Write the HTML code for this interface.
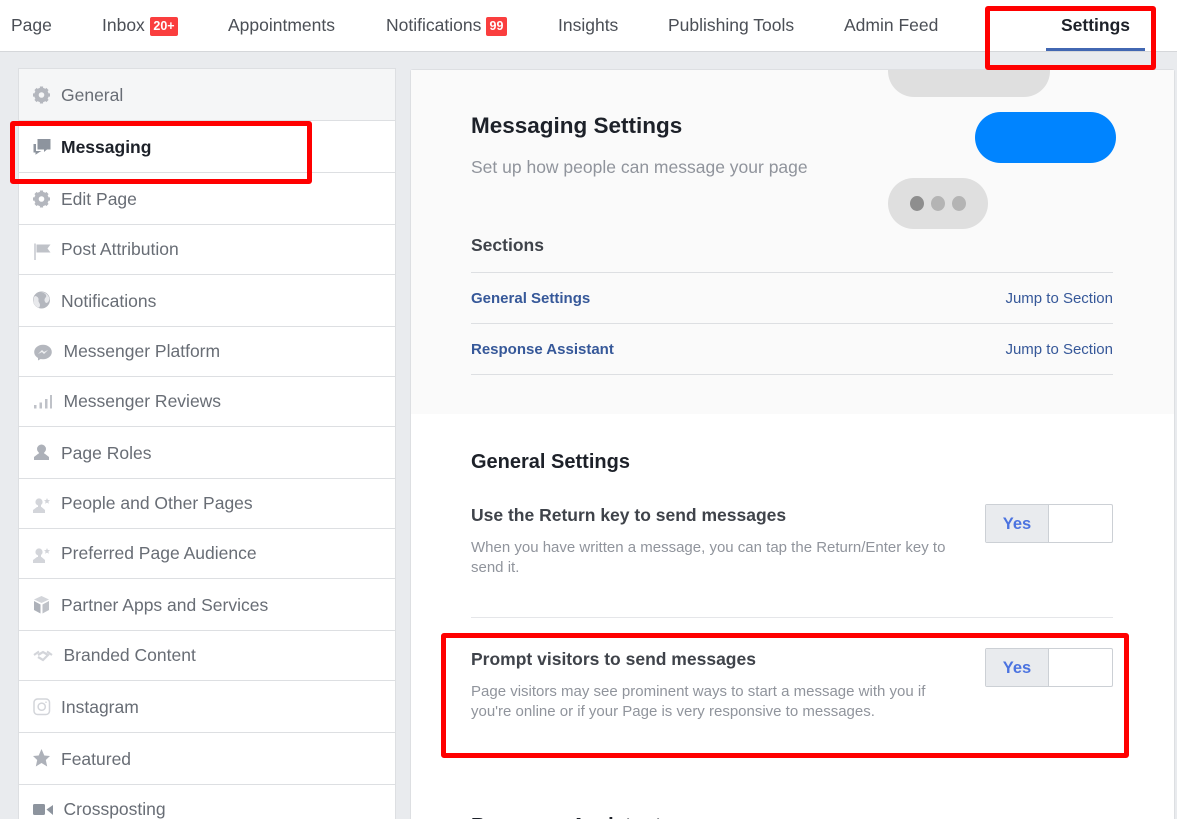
<!DOCTYPE html>
<html><head><meta charset="utf-8"><style>
html,body{margin:0;padding:0;width:1177px;height:819px;overflow:hidden}
#w{width:1177px;height:819px;overflow:hidden;position:relative;background:#e9ebee;font-family:"Liberation Sans",sans-serif;color:#606770}
.a{position:absolute;white-space:nowrap}
.l{position:absolute;background:#dddfe2;height:1px}
.nav{font-size:17.5px;top:14px;line-height:22px;color:#4b4f56}
.s{font-size:17.5px;line-height:22px;color:#686d75}
.i{position:absolute}
.badge{position:absolute;background:#fa3e3e;color:#fff;font-weight:bold;font-size:12.5px;line-height:19px;height:19px;text-align:center;border-radius:2px;top:17px}
.red{position:absolute;border:5px solid #f00;border-radius:3px;box-sizing:border-box}
.tog{position:absolute;left:985px;width:128px;height:39px;border:1px solid #ccd0d5;border-radius:2px;box-sizing:border-box;background:#fff}
.tog b{position:absolute;left:0;top:0;width:62px;height:37px;background:#e9ebee;border-right:1px solid #ccd0d5;color:#4b73e0;font-size:16.5px;line-height:39px;text-align:center}
.h{font-weight:bold;font-size:17.5px;line-height:22px;color:#3f434a;left:471px}
.d{font-size:15px;line-height:20px;color:#90949c;left:471px}
.lk{font-weight:bold;font-size:15px;line-height:20px;color:#365899;left:471px}
.j{font-size:15px;line-height:20px;color:#365899;right:64px}
</style></head><body><div id="w">
<div class="a" style="left:0;top:0;width:1177px;height:51px;background:#fff;border-bottom:1px solid #d5d7da"></div>
<div class="a nav" style="left:11px">Page</div>
<div class="a nav" style="left:102px">Inbox</div><div class="badge" style="left:150px;width:28px">20+</div>
<div class="a nav" style="left:228px">Appointments</div>
<div class="a nav" style="left:386px">Notifications</div><div class="badge" style="left:486px;width:21px">99</div>
<div class="a nav" style="left:558px">Insights</div>
<div class="a nav" style="left:668px">Publishing Tools</div>
<div class="a nav" style="left:844px">Admin Feed</div>
<div class="a nav" style="left:1061px;font-weight:bold;color:#1d2129">Settings</div>
<div class="a" style="left:1046px;top:48px;width:99px;height:3px;background:#4267b2"></div>

<div class="a" style="left:18px;top:68px;width:378px;height:760px;background:#fff;border:1px solid #dddfe2;box-sizing:border-box"></div>
<div class="a" style="left:19px;top:69px;width:376px;height:51px;background:#f5f6f7"></div>
<div class="l" style="left:19px;width:376px;top:120px"></div>
<div class="l" style="left:19px;width:376px;top:172px"></div>
<div class="l" style="left:19px;width:376px;top:224px"></div>
<div class="l" style="left:19px;width:376px;top:274px"></div>
<div class="l" style="left:19px;width:376px;top:326px"></div>
<div class="l" style="left:19px;width:376px;top:376px"></div>
<div class="l" style="left:19px;width:376px;top:426px"></div>
<div class="l" style="left:19px;width:376px;top:478px"></div>
<div class="l" style="left:19px;width:376px;top:528px"></div>
<div class="l" style="left:19px;width:376px;top:578px"></div>
<div class="l" style="left:19px;width:376px;top:630px"></div>
<div class="l" style="left:19px;width:376px;top:680px"></div>
<div class="l" style="left:19px;width:376px;top:732px"></div>
<div class="l" style="left:19px;width:376px;top:784px"></div>

<div class="a s" style="left:61px;top:84px">General</div>
<div class="a s" style="left:61px;top:136px;font-weight:bold;color:#1d2129">Messaging</div>
<div class="a s" style="left:61px;top:188px">Edit Page</div>
<div class="a s" style="left:61px;top:238px">Post Attribution</div>
<div class="a s" style="left:61px;top:290px">Notifications</div>
<div class="a s" style="left:63.5px;top:340px">Messenger Platform</div>
<div class="a s" style="left:63.5px;top:390px">Messenger Reviews</div>
<div class="a s" style="left:61px;top:442px">Page Roles</div>
<div class="a s" style="left:61px;top:492px">People and Other Pages</div>
<div class="a s" style="left:61px;top:542px">Preferred Page Audience</div>
<div class="a s" style="left:61px;top:594px">Partner Apps and Services</div>
<div class="a s" style="left:63.5px;top:644px">Branded Content</div>
<div class="a s" style="left:61px;top:696px">Instagram</div>
<div class="a s" style="left:61px;top:748px">Featured</div>
<div class="a s" style="left:63.5px;top:798px">Crossposting</div>

<svg class="i" style="left:0;top:0" width="400" height="819" viewBox="0 0 400 819">
<defs>
<g id="gear"><circle cx="0" cy="0" r="5" fill="none" stroke="#b4b7be" stroke-width="4.4"/><g stroke="#b4b7be" stroke-width="3.2"><path d="M0-8.500V-6M0 6V8.500M-8.500 0H-6M6 0H8.500M-6 -6L-4.200-4.200M4.200 4.200L6 6M-6 6L-4.200 4.200M4.200-4.200L6-6"/></g></g>
<g id="pstar" fill="#d3d5da"><circle cx="6" cy="-3" r="3.600"/><path d="M0 8V5L4 2H8.500L12 5V8Z"/><path d="M5 -1H8V3H5Z"/><path d="M14-7l.9 2 2.100.2-1.600 1.400.5 2.100-1.900-1.100-1.900 1.100.5-2.100-1.600-1.400 2.100-.2z"/></g>
</defs>
<use href="#gear" x="41.500" y="95"/>
<use href="#gear" x="41.500" y="199"/>
<path d="M37.500 139H50.500V149.500H47L44 152V149.500H37.500Z" fill="#8d949e"/><path d="M33.500 144H36V151H41.500L40 151.800 35.500 154.800V152.500H33.500Z" fill="#8d949e"/>
<path d="M35 243.500V260" stroke="#d3d5da" stroke-width="2" fill="none"/><path d="M36.500 244.500H50.500L47.500 248.500L50.500 252.500H36.500Z" fill="#bfc2c8"/>
<circle cx="41.500" cy="300" r="8.500" fill="#b4b7be"/><path d="M41 292C45 293 47 295 46 297 44 299 44 301 46 303 48 303 49 301 49.500 299 49 295 45 292 41 292ZM35 296C37 296 39 298 38.500 300 38 302 40 303 40 305 40 307 39 308 38 307.500 35 306 33 303 33.500 300 33.500 298 34 297 35 296Z" fill="#e8e9ec"/>
<ellipse cx="43" cy="352" rx="8.800" ry="7.300" fill="#b4b7be"/><path d="M38 356V360.500L41.500 358.500Z" fill="#b4b7be"/><path d="M38 354L42 350 44 352 48 350 44 354 42 352Z" fill="#f0f1f3"/>
<g fill="#bfc2c8"><rect x="34" y="405" width="2.500" height="3.500"/><rect x="39.500" y="402.500" width="2.500" height="6"/><rect x="45" y="399" width="2.500" height="9.500"/><rect x="50" y="395" width="2" height="13.500"/></g>
<circle cx="41.500" cy="449" r="4.500" fill="#adb1b9"/><path d="M34 460V457L38.500 453.500H44.500L49 457V460Z" fill="#adb1b9"/><path d="M39 450H44V455H39Z" fill="#adb1b9"/>
<use href="#pstar" x="33" y="505"/>
<use href="#pstar" x="33" y="555"/>
<path d="M41.500 596L49 599.500 41.500 603 34 599.500Z" fill="#d3d5da"/><path d="M34 601L40.500 604.500V613.500L34 610Z" fill="#adb1b9"/><path d="M49 601L42.500 604.500V613.500L49 610Z" fill="#bfc2c8"/>
<g fill="none" stroke="#d3d5da" stroke-width="2"><path d="M34 655L39 651.500M52 655L47 651.500"/><path d="M38 655L43 652 48 655 43 660 38 657" stroke-width="2.200"/></g>
<rect x="34" y="699" width="15.500" height="15.500" rx="3.500" fill="none" stroke="#d3d5da" stroke-width="1.500"/><circle cx="41.700" cy="706.700" r="3.600" fill="none" stroke="#d3d5da" stroke-width="1.500"/><circle cx="46" cy="702.200" r=".8" fill="#d3d5da"/>
<path d="M41.500 749L44.300 755.500 50 756 45.800 760 47.200 766.500 41.500 763 35.800 766.500 37.200 760 33 756 38.700 755.500Z" fill="#adb1b9"/>
<rect x="33" y="804" width="12" height="11" rx="1.500" fill="#8d949e"/><path d="M46.500 809.500L53 805V815Z" fill="#8d949e"/>
</svg>

<div class="a" style="left:410px;top:69px;width:765px;height:760px;background:#fff;border:1px solid #dddfe2;box-sizing:border-box;border-radius:3px"></div>
<div class="a" style="left:411px;top:70px;width:763px;height:344px;background:#fafafa;overflow:hidden">
  <div class="a" style="left:477px;top:-50px;width:162px;height:77px;border-radius:26px;background:#dfdfdf"></div>
  <div class="a" style="left:564px;top:42px;width:141px;height:51px;border-radius:26px;background:#0084ff"></div>
  <div class="a" style="left:477px;top:108px;width:100px;height:51px;border-radius:26px;background:#dfdfdf"></div>
  <div class="a" style="left:499px;top:126px;width:14px;height:15px;border-radius:50%;background:#8e8e8e"></div>
  <div class="a" style="left:520px;top:126px;width:14px;height:15px;border-radius:50%;background:#b4b4b4"></div>
  <div class="a" style="left:541px;top:126px;width:14px;height:15px;border-radius:50%;background:#b4b4b4"></div>
</div>
<div class="a" style="left:471px;top:112px;font-size:22.500px;line-height:28px;font-weight:bold;color:#1d2129">Messaging Settings</div>
<div class="a" style="left:471px;top:156px;font-size:17.500px;line-height:22px;color:#90949c">Set up how people can message your page</div>
<div class="a" style="left:471px;top:234px;font-size:17.500px;line-height:22px;font-weight:bold;color:#3f434a">Sections</div>
<div class="l" style="left:471px;width:642px;top:272px"></div>
<div class="a lk" style="top:289px">General Settings</div>
<div class="a j" style="top:289px">Jump to Section</div>
<div class="l" style="left:471px;width:642px;top:323px"></div>
<div class="a lk" style="top:340px">Response Assistant</div>
<div class="a j" style="top:340px">Jump to Section</div>
<div class="l" style="left:471px;width:642px;top:374px"></div>

<div class="a" style="left:471px;top:450px;font-size:20px;line-height:24px;font-weight:bold;color:#1d2129">General Settings</div>
<div class="a h" style="top:504px">Use the Return key to send messages</div>
<div class="a d" style="top:538px">When you have written a message, you can tap the Return/Enter key to<br>send it.</div>
<div class="tog" style="top:504px"><b>Yes</b></div>
<div class="l" style="left:471px;width:642px;top:617px;background:#e5e6e9"></div>
<div class="a h" style="top:648px">Prompt visitors to send messages</div>
<div class="a d" style="top:682px">Page visitors may see prominent ways to start a message with you if<br>you're online or if your Page is very responsive to messages.</div>
<div class="tog" style="top:648px"><b>Yes</b></div>
<div class="a" style="left:471px;top:813.500px;font-size:20px;line-height:24px;font-weight:bold;color:#1d2129">Response Assistant</div>

<div class="red" style="left:985px;top:6px;width:171px;height:64px"></div>
<div class="red" style="left:10px;top:121px;width:302px;height:63px"></div>
<div class="red" style="left:441px;top:633px;width:688px;height:125px"></div>
</div></body></html>
